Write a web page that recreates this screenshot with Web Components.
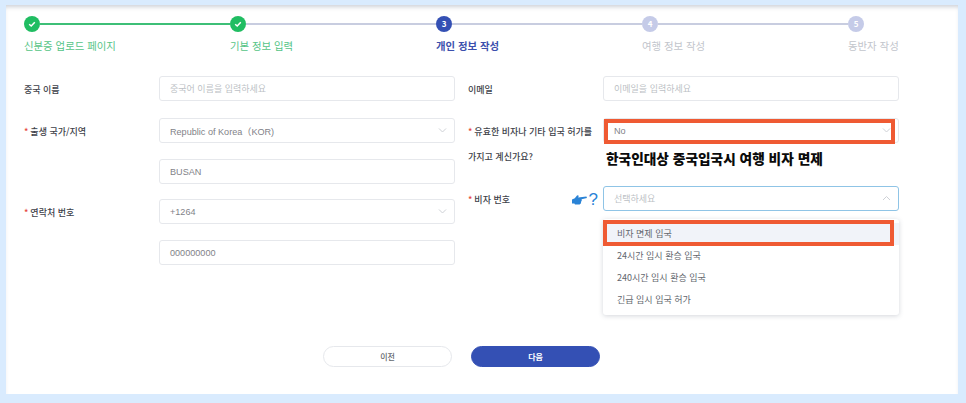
<!DOCTYPE html>
<html lang="ko">
<head>
<meta charset="utf-8">
<title>개인 정보 작성</title>
<style>
    html, body { margin: 0; height: 100%; }
    body {
        background: #d9ebfe;
        font-family: "Noto Sans CJK KR", "Noto Sans", sans-serif;
        overflow: hidden;
    }
</style>
</head>
<body>
<visa-card>
    <step-bar>
        <step-item state="done" label="신분증 업로드 페이지" line="done"></step-item>
        <step-item state="done" label="기본 정보 입력"></step-item>
        <step-item state="active" num="3" label="개인 정보 작성"></step-item>
        <step-item num="4" label="여행 정보 작성"></step-item>
        <step-item num="5" label="동반자 작성" last></step-item>
    </step-bar>
    <div slot="left">
        <form-row label="중국 이름">
            <text-box placeholder="중국어 이름을 입력하세요"></text-box>
        </form-row>
        <form-row label="출생 국가/지역" required>
            <text-box value="Republic of Korea（KOR)" chevron="down"></text-box>
            <text-box value="BUSAN"></text-box>
        </form-row>
        <form-row label="연락처 번호" required class="tight">
            <text-box value="+1264" chevron="down"></text-box>
            <text-box value="000000000"></text-box>
        </form-row>
    </div>
    <div slot="right">
        <form-row label="이메일">
            <text-box placeholder="이메일을 입력하세요"></text-box>
        </form-row>
        <form-row label="유효한 비자나 기타 입국 허가를" label2="가지고 계신가요?" required>
            <text-box value="No" chevron="down" marked></text-box>
            <note-text>한국인대상 중국입국시 여행 비자 면제</note-text>
        </form-row>
        <form-row label="비자 번호" required hint>
            <text-box placeholder="선택하세요" chevron="up" focused>
                <drop-menu slot="menu">
                    <menu-item marked>비자 면제 입국</menu-item>
                    <menu-item>24시간 임시 환승 입국</menu-item>
                    <menu-item>240시간 임시 환승 입국</menu-item>
                    <menu-item>긴급 임시 입국 허가</menu-item>
                </drop-menu>
            </text-box>
        </form-row>
    </div>
    <round-btn slot="actions">이전</round-btn>
    <round-btn slot="actions" primary>다음</round-btn>
</visa-card>

<script>
class VisaCard extends HTMLElement {
    constructor() {
        super();
        this.attachShadow({ mode: 'open' });
        this.shadowRoot.innerHTML = `
            <style>
                :host {
                    display: flex;
                    flex-direction: column;
                    box-sizing: border-box;
                    width: 952px;
                    height: 389px;
                    margin: 5px 8px 0 6px;
                    padding: 11px 18px 27px;
                    background: #fff;
                    box-shadow: inset 0 4px 4px -2px rgba(90, 100, 120, .3);
                }
                .form {
                    display: grid;
                    grid-template-columns: 431px 431px;
                    column-gap: 13px;
                    margin-top: 23px;
                }
                .actions {
                    display: flex;
                    gap: 19px;
                    margin: auto 0 0 299px;
                }
            </style>
            <slot></slot>
            <div class="form">
                <slot name="left"></slot>
                <slot name="right"></slot>
            </div>
            <div class="actions"><slot name="actions"></slot></div>
        `;
    }
}

class StepBar extends HTMLElement {
    constructor() {
        super();
        this.attachShadow({ mode: 'open' });
        this.shadowRoot.innerHTML = `
            <style>
                :host { display: flex; }
            </style>
            <slot></slot>
        `;
    }
}

class StepItem extends HTMLElement {
    constructor() {
        super();
        this.attachShadow({ mode: 'open' });
    }

    connectedCallback() {
        const state = this.getAttribute('state') || 'todo';
        const check = `<svg width="10" height="10" viewBox="0 0 10 10"><path d="M2.2 5.2 4.2 7 7.8 3.2" fill="none" stroke="#fff" stroke-width="1.5"/></svg>`;
        this.shadowRoot.innerHTML = `
            <style>
                :host {
                    display: block;
                    flex: 0 0 206px;
                    color: #c2c5cc;
                    font-size: 10.4px;
                    line-height: 14px;
                }
                :host([last]) { flex-basis: 60px; white-space: nowrap; }
                .head { display: flex; align-items: center; height: 16px; }
                .dot {
                    flex: none;
                    width: 16px;
                    height: 16px;
                    border-radius: 50%;
                    background: #c5cbe8;
                    color: #fff;
                    display: flex;
                    align-items: center;
                    justify-content: center;
                    font-size: 8px;
                    font-weight: 700;
                }
                .line { flex: 1; height: 1.5px; background: #c8cde0; }
                .name { margin-top: 7px; white-space: nowrap; }
                :host([state="done"]) { color: #56c487; }
                :host([state="done"]) .dot { background: #20bd62; }
                :host([line="done"]) .line { background: #3dbf77; }
                :host([state="active"]) { color: #3c50ad; font-weight: 700; }
                :host([state="active"]) .dot { background: #3450b4; }
                :host([last]) .line { display: none; }
            </style>
            <div class="head">
                <div class="dot">${state === 'done' ? check : this.getAttribute('num')}</div>
                <div class="line"></div>
            </div>
            <div class="name">${this.getAttribute('label')}</div>
        `;
    }
}

class FormRow extends HTMLElement {
    constructor() {
        super();
        this.attachShadow({ mode: 'open' });
    }

    connectedCallback() {
        const hint = this.hasAttribute('hint') ? `
            <span class="hint">
                <svg width="15" height="11" viewBox="0 0 15 11"><path d="M0 5.4 2.8 4.2 5.2 1.2 6.8 1.8 6.2 3.4 14.4 2.6 15 4 9.6 5.2 9.8 6.4 9.2 7.6 8.8 9.4 7.6 10.6 3 10.6 2.4 9.6 0 9.4Z" fill="#2a83d6"/></svg>
                <span>?</span>
            </span>` : '';
        const second = this.getAttribute('label2');
        this.shadowRoot.innerHTML = `
            <style>
                :host {
                    display: grid;
                    grid-template-columns: 135px 296px;
                    margin-bottom: 17px;
                    color: #3d4149;
                    font-size: 9px;
                    font-weight: 500;
                }
                :host(.tight) { margin-top: -2px; }
                .label {
                    position: relative;
                    display: flex;
                    align-items: center;
                    box-sizing: border-box;
                    height: 25px;
                    padding-top: 2px;
                    line-height: 23px;
                    white-space: nowrap;
                }
                .second { margin-top: 2px; line-height: 24px; white-space: nowrap; }
                .star { color: #e6483d; margin-right: 2px; }
                .hint {
                    position: absolute;
                    right: 5px;
                    top: 5px;
                    display: flex;
                    align-items: center;
                    gap: 2px;
                    color: #2a83d6;
                    font: 400 17px/17px "Liberation Sans", sans-serif;
                }
                .controls { display: flex; flex-direction: column; gap: 16px; }
            </style>
            <div>
                <div class="label">${this.hasAttribute('required') ? '<span class="star">*</span>' : ''}<span>${this.getAttribute('label')}</span>${hint}</div>
                ${second ? `<div class="second">${second}</div>` : ''}
            </div>
            <div class="controls"><slot></slot></div>
        `;
    }
}

class TextBox extends HTMLElement {
    constructor() {
        super();
        this.attachShadow({ mode: 'open' });
    }

    connectedCallback() {
        const value = this.getAttribute('value');
        const chevron = this.getAttribute('chevron');
        const points = chevron === 'up' ? '1,5 4.5,1.5 8,5' : '1,1.5 4.5,5 8,1.5';
        this.shadowRoot.innerHTML = `
            <style>
                :host {
                    display: flex;
                    position: relative;
                    box-sizing: border-box;
                    height: 25px;
                    align-items: center;
                    padding: 0 7px 0 10px;
                    background: #fff;
                    border: 1px solid #e6e8ec;
                    border-radius: 3px;
                    color: #7f8288;
                    font: 400 9.1px "Liberation Sans", "Noto Sans CJK KR", sans-serif;
                }
                :host([focused]) { border-color: #8fc4e6; }
                .text { flex: 1; white-space: nowrap; }
                .placeholder { color: #bcbfc5; font-family: "Noto Sans CJK KR", sans-serif; font-size: 9px; }
                svg { flex: none; }
                .mark {
                    display: none;
                    position: absolute;
                    left: 0;
                    top: 0;
                    width: 291px;
                    height: 25px;
                    box-sizing: border-box;
                    border: 4px solid #ef5a33;
                }
                :host([marked]) .mark { display: block; }
            </style>
            <span class="text ${value ? '' : 'placeholder'}">${value || this.getAttribute('placeholder')}</span>
            ${chevron ? `<svg width="9" height="7" viewBox="0 0 9 7"><polyline points="${points}" fill="none" stroke="#ced1d6" stroke-width="1"/></svg>` : ''}
            <div class="mark"></div>
            <slot name="menu"></slot>
        `;
    }
}

class NoteText extends HTMLElement {
    constructor() {
        super();
        this.attachShadow({ mode: 'open' });
        this.shadowRoot.innerHTML = `
            <style>
                :host {
                    display: block;
                    margin: -12px 0 0 3px;
                    color: #0b0b0b;
                    font-size: 13.7px;
                    font-weight: 900;
                    line-height: 22px;
                    white-space: nowrap;
                }
            </style>
            <slot></slot>
        `;
    }
}

class DropMenu extends HTMLElement {
    constructor() {
        super();
        this.attachShadow({ mode: 'open' });
        this.shadowRoot.innerHTML = `
            <style>
                :host {
                    display: block;
                    position: absolute;
                    left: -1px;
                    top: 32px;
                    width: 296px;
                    box-sizing: border-box;
                    padding: 4px 0 4px;
                    background: #fff;
                    border-radius: 3px;
                    box-shadow: 0 1px 5px rgba(60, 70, 90, .22);
                }
            </style>
            <slot></slot>
        `;
    }
}

class MenuItem extends HTMLElement {
    constructor() {
        super();
        this.attachShadow({ mode: 'open' });
        this.shadowRoot.innerHTML = `
            <style>
                :host {
                    display: block;
                    position: relative;
                    height: 22px;
                    padding-left: 14px;
                    color: #63676e;
                    font: 400 9px/22px "Noto Sans CJK KR", sans-serif;
                }
                :host([marked]) { background: #f1f3f9; }
                .mark {
                    display: none;
                    position: absolute;
                    left: 0;
                    top: -3px;
                    width: 291px;
                    height: 26px;
                    box-sizing: border-box;
                    border: 4px solid #ef5a33;
                }
                :host([marked]) .mark { display: block; }
            </style>
            <slot></slot>
            <div class="mark"></div>
        `;
    }
}

class RoundBtn extends HTMLElement {
    constructor() {
        super();
        this.attachShadow({ mode: 'open' });
        this.shadowRoot.innerHTML = `
            <style>
                :host {
                    display: flex;
                    align-items: center;
                    justify-content: center;
                    box-sizing: border-box;
                    width: 129px;
                    height: 21px;
                    border: 1px solid #e6e8ec;
                    border-radius: 11px;
                    background: #fff;
                    color: #63676e;
                    font-size: 8px;
                    font-weight: 500;
                }
                :host([primary]) {
                    background: #3450b4;
                    border-color: #3450b4;
                    color: #fff;
                    font-weight: 700;
                }
            </style>
            <slot></slot>
        `;
    }
}

customElements.define('visa-card', VisaCard);
customElements.define('step-bar', StepBar);
customElements.define('step-item', StepItem);
customElements.define('form-row', FormRow);
customElements.define('text-box', TextBox);
customElements.define('note-text', NoteText);
customElements.define('drop-menu', DropMenu);
customElements.define('menu-item', MenuItem);
customElements.define('round-btn', RoundBtn);
</script>
</body>
</html>
